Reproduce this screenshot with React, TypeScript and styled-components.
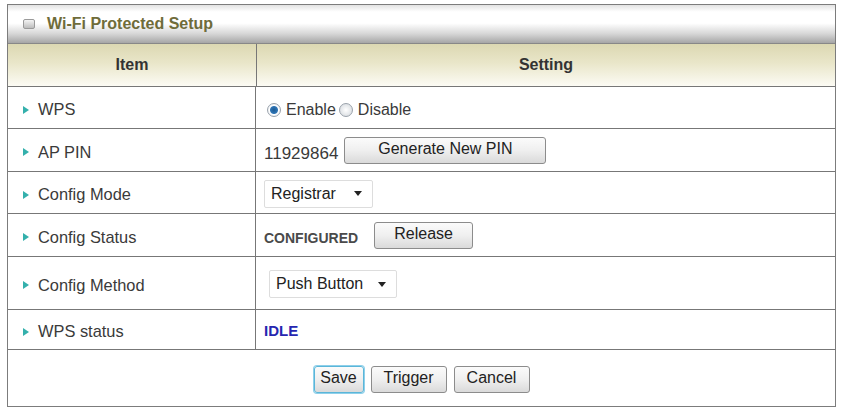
import styled, { createGlobalStyle } from "styled-components";

const GlobalStyle = createGlobalStyle`
  body {
    margin: 0;
    background: #ffffff;
    font-family: "Liberation Sans", Arial, sans-serif;
  }
`;

const rows = [
  { label: "WPS", height: 41 },
  { label: "AP PIN", height: 42 },
  { label: "Config Mode", height: 41 },
  { label: "Config Status", height: 42 },
  { label: "Config Method", height: 52 },
  { label: "WPS status", height: 39 },
];

export default function App() {
  return (
    <>
      <GlobalStyle />
      <Page>
        <Panel>
          <TitleBar>
            <TitleIcon />
            <span>Wi-Fi Protected Setup</span>
          </TitleBar>
          <HeaderRow>
            <HeaderCell>Item</HeaderCell>
            <HeaderCell>Setting</HeaderCell>
          </HeaderRow>
          {rows.map((row, i) => (
            <Row key={row.label} h={row.height}>
              <LabelCell>
                <Bullet />
                {row.label}
              </LabelCell>
              <SettingCell>{renderSetting(i)}</SettingCell>
            </Row>
          ))}
          <Actions>
            <Button w={50} focused>
              Save
            </Button>
            <Button w={76}>Trigger</Button>
            <Button w={76}>Cancel</Button>
          </Actions>
        </Panel>
      </Page>
    </>
  );
}

function renderSetting(i: number) {
  switch (i) {
    case 0:
      return (
        <RadioGroup>
          <Radio checked />
          <span>Enable</span>
          <Radio />
          <span>Disable</span>
        </RadioGroup>
      );
    case 1:
      return (
        <>
          <Value>11929864</Value>
          <Button w={202}>Generate New PIN</Button>
        </>
      );
    case 2:
      return (
        <FakeSelect w={109}>
          Registrar
          <Caret />
        </FakeSelect>
      );
    case 3:
      return (
        <>
          <Status>CONFIGURED</Status>
          <Button w={99}>Release</Button>
        </>
      );
    case 4:
      return (
        <FakeSelect w={128} offset={5}>
          Push Button
          <Caret />
        </FakeSelect>
      );
    default:
      return <Idle>IDLE</Idle>;
  }
}

const Page = styled.div`
  padding: 4px 6px 0 7px;
`;

const Panel = styled.div`
  width: 827px;
  border: 1px solid #7c7c7c;
  color: #333333;
  font-size: 16px;
`;

const TitleBar = styled.div`
  height: 38px;
  display: flex;
  align-items: center;
  gap: 12px;
  padding-left: 15px;
  border-bottom: 1px solid #888888;
  background: linear-gradient(
    #e2e2e2 0%,
    #ffffff 18%,
    #ffffff 48%,
    #d6d6d6 76%,
    #a6a6a6 100%
  );
  color: #6f6c3a;
  font-weight: bold;
  font-size: 16px;
`;

const TitleIcon = styled.div`
  width: 10px;
  height: 8px;
  border: 1px solid #9a9a9a;
  border-radius: 2px;
  background: linear-gradient(#f4f4f4, #bdbdbd);
`;

const HeaderRow = styled.div`
  display: grid;
  grid-template-columns: 248px 1fr;
  height: 42px;
  background: linear-gradient(#dcd8b2 0%, #e9e6c9 45%, #fcfbf4 100%);
`;

const HeaderCell = styled.div`
  display: flex;
  align-items: center;
  justify-content: center;
  font-weight: bold;
  color: #333333;
  & + & {
    border-left: 1px solid #777777;
  }
`;

const Row = styled.div<{ h: number }>`
  display: grid;
  grid-template-columns: 248px 1fr;
  height: ${(p) => p.h}px;
  border-top: 1px solid #777777;
`;

const LabelCell = styled.div`
  display: flex;
  align-items: center;
  padding: 4px 0 0 15px;
  border-right: 1px solid #777777;
  color: #3a3a3a;
  font-size: 16.4px;
`;

const Bullet = styled.span`
  width: 0;
  height: 0;
  border-top: 4.5px solid transparent;
  border-bottom: 4.5px solid transparent;
  border-left: 6px solid #34b0ac;
  margin-right: 9px;
`;

const SettingCell = styled.div`
  display: flex;
  align-items: center;
  padding-left: 8px;
  gap: 6px;
`;

const RadioGroup = styled.div`
  display: flex;
  align-items: center;
  gap: 3px;
  padding-left: 3px;
  padding-top: 4px;
  color: #3a3a3a;
`;

const Radio = styled.span<{ checked?: boolean }>`
  width: 12px;
  height: 12px;
  border-radius: 50%;
  border: 1px solid #9aa2ab;
  background: ${(p) =>
    p.checked
      ? "radial-gradient(circle, #1a5a94 0, #2f74b4 3.5px, #ffffff 4.5px, #e4eaf0 7px)"
      : "radial-gradient(circle, #ffffff 0, #d9dde1 7px)"};
  margin-right: 2px;
`;

const Value = styled.span`
  color: #3a3a3a;
  font-size: 17px;
  padding-top: 7px;
`;

const Status = styled.span`
  font-weight: bold;
  font-size: 14px;
  color: #4a4a4a;
  padding-top: 6px;
  margin-right: 10px;
`;

const Idle = styled.span`
  font-weight: bold;
  color: #2626b0;
  font-size: 15px;
  padding-top: 2px;
`;

const Button = styled.button<{ w?: number; focused?: boolean }>`
  height: 27px;
  ${(p) => (p.w ? `width: ${p.w}px;` : "padding: 0 8px;")}
  padding-left: 0;
  padding-right: 0;
  font-family: "Liberation Sans", Arial, sans-serif;
  font-size: 16px;
  color: #222222;
  border-radius: 3px;
  border: 1px solid ${(p) => (p.focused ? "#5ab6d9" : "#8c8c8c")};
  box-shadow: ${(p) => (p.focused ? "0 0 0 1px #8fd0ea" : "none")};
  background: linear-gradient(#fbfbfb 0%, #efefef 50%, #dadada 100%);
  padding-bottom: 3px;
`;

const FakeSelect = styled.div<{ w: number; offset?: number }>`
  width: ${(p) => p.w}px;
  height: 28px;
  box-sizing: border-box;
  margin-left: ${(p) => p.offset ?? 0}px;
  margin-top: 2px;
  display: flex;
  align-items: center;
  justify-content: space-between;
  padding: 0 10px 0 6px;
  border: 1px solid #dddddd;
  border-radius: 2px;
  background: #ffffff;
  color: #222222;
`;

const Caret = styled.span`
  width: 0;
  height: 0;
  border-left: 4px solid transparent;
  border-right: 4px solid transparent;
  border-top: 5px solid #222222;
`;

const Actions = styled.div`
  height: 54px;
  border-top: 1px solid #777777;
  display: flex;
  align-items: center;
  justify-content: center;
  gap: 7px;
  padding-top: 2px;
`;
